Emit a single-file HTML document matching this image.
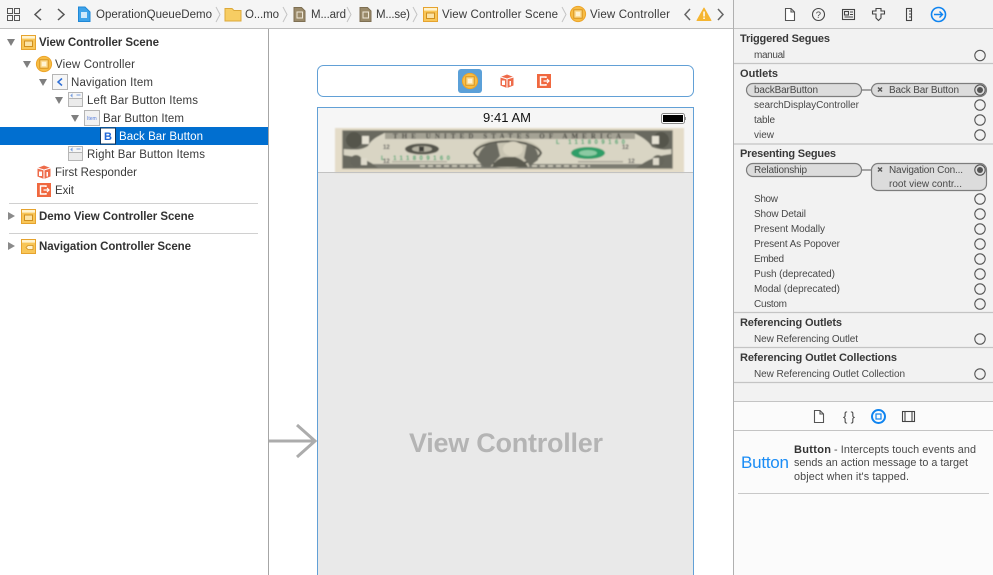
<!DOCTYPE html>
<html>
<head>
<meta charset="utf-8">
<style>
html,body{margin:0;padding:0;width:993px;height:575px;overflow:hidden;background:#fff}
svg{display:block}
text{font-family:"Liberation Sans",sans-serif;font-size:11.5px;fill:#3a3a3a}
.b{font-weight:bold;font-size:11.5px;fill:#333}
.s{font-size:10px;fill:#484848}
.h{font-size:11px;font-weight:bold;fill:#383838}
.c{fill:none;stroke:#555;stroke-width:1.1}
.l{stroke:#c4c4c4;stroke-width:1.2}
.i{fill:none;stroke:#444;stroke-width:1.1}
.p{fill:#dcdcdc;stroke:#7d7d7d;stroke-width:1.2}
</style>
</head>
<body>
<svg width="993" height="575" viewBox="0 0 993 575" xmlns="http://www.w3.org/2000/svg">
<defs>
<filter id="bl" x="-2%" y="-10%" width="104%" height="120%"><feGaussianBlur stdDeviation="0.7"/></filter>
<g id="scene"><rect x=".5" y=".5" width="14" height="14" fill="#f8c658" stroke="#e6a32e"/><rect x="1" y="1" width="13" height="2.6" fill="#fff3cf"/><rect x="3.5" y="6" width="8" height="5.5" fill="#fbe3a6" stroke="#d08f1e"/></g>
<g id="vc"><circle cx="8" cy="8" r="7.6" fill="#f7bd45" stroke="#eda52a"/><rect x="3.8" y="3.8" width="8.4" height="8.4" fill="#fbd98b" stroke="#d89420"/><rect x="5.8" y="5.8" width="4.4" height="4.4" fill="#fff3d3"/></g>
<g id="fr"><path d="M7 0.5 L13.5 3 L13.5 11.5 L7 14 L0.5 11.5 L0.5 3Z" fill="#ee6b4a"/><path d="M7 5 L7 14 M0.5 3 L7 5 L13.5 3" stroke="#fff" fill="none"/><rect x="2" y="6.5" width="3" height="4.5" fill="#fff"/><path d="M9.5 7h1.5v4.5h-1.5z" fill="#fff"/></g>
<g id="ex"><rect width="14" height="14" fill="#f0683f"/><path d="M9 4V3H3.5v8H9v-1" fill="none" stroke="#fff" stroke-width="1.4"/><path d="M6.5 7h5M10 5l2 2-2 2" fill="none" stroke="#fff" stroke-width="1.2"/></g>
<g id="bar"><rect x=".5" y=".5" width="14" height="14" fill="#f6f6f6" stroke="#b5b5b5"/><path d="M1 6.5h13" stroke="#b5b5b5"/><rect x="1" y="7" width="13" height="7" fill="#ebebeb"/><path d="M3 3.5l1-1v2zM8.5 3h4" stroke="#7aa0e0" fill="none"/></g>
<g id="doc"><path d="M.5.5H6L9.500 4V12.500H.5Z M6 .5V4H9.500" fill="#fff" stroke="#555" stroke-width="1.1"/></g>
<g id="ci"><circle cx="0" cy="0" r="5.2" class="c"/></g>
<g id="tri"><path d="M0 0H8L4 7Z" fill="#7f7f7f"/></g>
<g id="trr"><path d="M0 0V8L7 4Z" fill="#8a8a8a"/></g>
<g id="sep"><path d="M0 0L4 7.5L0 15" fill="none" stroke="#c4c4c4" stroke-width="1"/></g>
<g id="sb"><path d="M1 .5H8.5L12 4V14.5H1Z" fill="#9a8a6a" stroke="#7e6f52"/><rect x="4" y="5" width="5.5" height="6" fill="none" stroke="#f0e8d8"/></g>
</defs>

<!-- toolbar -->
<rect x="0" y="0" width="733" height="28" fill="#f5f5f5"/>
<g fill="none" stroke="#555" stroke-width="1">
<rect x="7.5" y="8.5" width="5" height="5"/><rect x="14.5" y="8.5" width="5" height="5"/><rect x="7.5" y="15.5" width="5" height="5"/><rect x="14.5" y="15.5" width="5" height="5"/>
</g>
<path d="M41 9L35 14.5L41 20M58 9L64 14.5L58 20" fill="none" stroke="#555" stroke-width="1.5"/>
<path d="M78.500 7H85L90 12V21.500H78.500Z" fill="#3ea3ea" stroke="#1f88d6"/><rect x="81" y="12" width="6" height="6" fill="#cfe9fb"/>
<text x="96" y="18" textLength="116" lengthAdjust="spacing">OperationQueueDemo</text>
<use href="#sep" x="216" y="7"/>
<path d="M225 8.500H232L234 10.500H241V21H225Z" fill="#f7cd63" stroke="#dca93a"/>
<text x="245" y="18" textLength="34">O...mo</text>
<use href="#sep" x="283" y="7"/>
<use href="#sb" x="293" y="7"/>
<text x="311" y="18" textLength="35">M...ard</text>
<use href="#sep" x="347" y="7"/>
<use href="#sb" x="359" y="7"/>
<text x="376" y="18" textLength="34">M...se)</text>
<use href="#sep" x="413" y="7"/>
<use href="#scene" x="423" y="7"/>
<text x="442" y="18" textLength="116">View Controller Scene</text>
<use href="#sep" x="562" y="7"/>
<use href="#vc" x="570" y="6"/>
<text x="590" y="18" textLength="80">View Controller</text>
<path d="M690 9L685 14.500L690 20M718 9L723 14.500L718 20" fill="none" stroke="#666" stroke-width="1.5"/>
<path d="M704 8L711 20.500H697Z" fill="#f5b531" stroke="#f5b531" stroke-linejoin="round"/><rect x="703.300" y="11.500" width="1.500" height="5" fill="#fff"/><rect x="703.300" y="17.500" width="1.500" height="1.500" fill="#fff"/>
<rect x="0" y="28" width="733" height="1" fill="#bdbdbd"/>

<!-- left pane -->
<rect x="0" y="29" width="268" height="546" fill="#fff"/>
<rect x="0" y="127" width="268" height="18" fill="#016fd0"/>
<rect x="268" y="29" width="1" height="546" fill="#a6a6a6"/>

<use href="#tri" x="7" y="39"/>
<use href="#scene" x="21" y="35"/>
<text x="39" y="46" class="b" textLength="120">View Controller Scene</text>

<use href="#tri" x="23" y="61"/>
<use href="#vc" x="36" y="56"/>
<text x="55" y="68" textLength="80">View Controller</text>

<use href="#tri" x="39" y="79"/>
<rect x="52.500" y="74.500" width="15" height="15" fill="#f6f6f6" stroke="#b5b5b5"/><path d="M62 78.500L58 82L62 85.500" fill="none" stroke="#2f6fd6" stroke-width="1.500"/>
<text x="71" y="86" textLength="82">Navigation Item</text>

<use href="#tri" x="55" y="97"/>
<use href="#bar" x="68" y="92"/>
<text x="87" y="104" textLength="111">Left Bar Button Items</text>

<use href="#tri" x="71" y="115"/>
<rect x="84.500" y="110.500" width="15" height="15" fill="#f2f2f2" stroke="#b5b5b5"/><text x="87" y="120" style="font-size:5px;fill:#5a80dc">Item</text>
<text x="103" y="122" textLength="81">Bar Button Item</text>

<rect x="100.500" y="128" width="15" height="16" fill="#fff" stroke="#12375e"/>
<text x="104" y="140" style="fill:#2168d8;font-size:11px;font-weight:bold">B</text>
<text x="119" y="140" textLength="84" style="fill:#fff">Back Bar Button</text>

<use href="#bar" x="68" y="146"/>
<text x="87" y="158" textLength="118">Right Bar Button Items</text>

<use href="#fr" x="37" y="165"/>
<text x="55" y="176" textLength="82">First Responder</text>

<use href="#ex" x="37" y="183"/>
<text x="55" y="194" textLength="19">Exit</text>

<rect x="9" y="203" width="249" height="1" fill="#d0d0d0"/>
<use href="#trr" x="8" y="212"/>
<use href="#scene" x="21" y="209"/>
<text x="39" y="220" class="b" textLength="155">Demo View Controller Scene</text>

<rect x="9" y="233" width="249" height="1" fill="#d0d0d0"/>
<use href="#trr" x="8" y="242"/>
<g transform="translate(21 239)"><rect x=".5" y=".5" width="14" height="14" fill="#f8c658" stroke="#e6a32e"/><rect x="1" y="1" width="13" height="2.600" fill="#fff3cf"/><path d="M5 8.500L7 6.500H12V10.500H7Z" fill="#fff3cf" stroke="#d08f1e" stroke-width=".8"/></g>
<text x="39" y="250" class="b" textLength="152">Navigation Controller Scene</text>

<!-- canvas -->
<rect x="269" y="29" width="464" height="546" fill="#fff"/>
<rect x="317.500" y="65.500" width="376" height="31" rx="6" fill="#fff" stroke="#62a0d6"/>
<rect x="458" y="69" width="24" height="24" rx="3" fill="#5ba0d8"/>
<use href="#vc" x="462" y="73"/>
<use href="#fr" x="500" y="74"/>
<use href="#ex" x="537" y="74"/>

<rect x="317.500" y="107.500" width="376" height="480" fill="#e9e9e9" stroke="#62a0d6"/>
<rect x="318" y="108" width="375" height="64" fill="#f6f6f6"/>
<text x="483" y="122" textLength="48" style="font-size:13px;fill:#111">9:41 AM</text>
<rect x="661.500" y="113.500" width="23" height="10" rx="2" fill="#fff" stroke="#888"/>
<rect x="663" y="115" width="20" height="7" fill="#000"/>
<rect x="685" y="117" width="1" height="3" fill="#999"/>

<!-- bill -->
<g filter="url(#bl)">
<rect x="335" y="128" width="349" height="45" fill="#e4dcc8"/>
<rect x="343" y="131" width="329" height="37" fill="#d9d5c4"/>
<rect x="343" y="131" width="329" height="37" fill="none" stroke="#77776c" stroke-width="1.500"/>
<!-- top and bottom bands -->
<rect x="343" y="131" width="329" height="2" fill="#6a6a60"/>
<rect x="385" y="133" width="250" height="6" fill="#a4a294"/>
<text x="393" y="138.500" textLength="228" style="font-family:'Liberation Serif',serif;font-size:7px;font-weight:bold;fill:#3d3d38">THE UNITED STATES OF AMERICA</text>
<rect x="343" y="164" width="329" height="4" fill="#7c7c72"/>
<path d="M420 166h170" stroke="#d9d5c4" stroke-width="1.500" stroke-dasharray="5 3"/>
<!-- corners -->
<path d="M343 131H388C380 136 372 138 368 146C362 150 356 150 343 149Z" fill="#69695f"/>
<path d="M343 168H378C372 163 366 158 343 155Z" fill="#69695f"/>
<path d="M672 131H630C640 136 648 140 652 147C660 150 666 150 672 149Z" fill="#69695f"/>
<path d="M672 168H636C646 161 654 156 672 154Z" fill="#69695f"/>
<circle cx="354" cy="140" r="8" fill="#55554c"/><circle cx="661" cy="140" r="8" fill="#55554c"/>
<circle cx="356" cy="161" r="6" fill="#66665c"/><circle cx="658" cy="161" r="6" fill="#66665c"/>
<rect x="362" y="136" width="7" height="8" fill="#e6e2d4"/>
<rect x="652" y="136" width="7" height="8" fill="#e6e2d4"/>
<rect x="361" y="158" width="6" height="7" fill="#dedacb"/>
<rect x="653" y="158" width="6" height="7" fill="#dedacb"/>
<!-- left seal -->
<ellipse cx="422" cy="149" rx="17" ry="5.500" fill="#55554c"/><ellipse cx="422" cy="149" rx="10" ry="3" fill="#b5b2a2"/><rect x="419" y="146.500" width="5" height="5" fill="#3e3e38"/>
<!-- portrait -->
<ellipse cx="507.500" cy="153" rx="34" ry="15" fill="#c8c4b2"/>
<path d="M474 153A34 14 0 0 1 541 153A34 14 0 0 1 474 153Z" fill="none" stroke="#55554c" stroke-width="2"/>
<path d="M477 160C480 146 490 142 497 143L500 156L490 167H484Z" fill="#6a6a60"/>
<path d="M527 143C535 146 539 152 538 160L530 166L524 158Z" fill="#6a6a60"/>
<path d="M492 167C495 160 500 158 505 157L515 157C522 159 526 163 528 167Z" fill="#5a5a50"/>
<ellipse cx="513" cy="149" rx="10" ry="7.500" fill="#d8d3c0"/>
<!-- green -->
<ellipse cx="588" cy="153" rx="17" ry="6" fill="#2f9e68"/><ellipse cx="588" cy="153" rx="9" ry="3" fill="#8ccaa3"/>
<text x="381" y="160" textLength="69" style="font-size:6px;font-weight:bold;fill:#3aa36a">L 111809160</text>
<text x="556" y="144" textLength="69" style="font-size:6px;font-weight:bold;fill:#3aa36a">L 111809160</text>
<text x="383" y="149" style="font-size:6px;font-weight:bold;fill:#555">12</text>
<text x="622" y="149" style="font-size:6px;font-weight:bold;fill:#555">12</text>
<text x="383" y="163" style="font-size:6px;font-weight:bold;fill:#555">12</text>
<text x="628" y="163" style="font-size:6px;font-weight:bold;fill:#555">12</text>
<rect x="392" y="161" width="55" height="1.500" fill="#b4b1a2"/>
<rect x="578" y="161" width="45" height="1.500" fill="#a9a698"/>
</g>
<rect x="318" y="172" width="375" height="1" fill="#c2c2c2"/>

<path d="M269 441H314M297 425L315 441L297 457" fill="none" stroke="#acacac" stroke-width="3"/>
<text x="409" y="452" textLength="194" style="font-size:27px;font-weight:bold;fill:#b4b4b4">View Controller</text>

<!-- right panel -->
<rect x="733" y="0" width="260" height="402" fill="#f2f2f2"/>
<rect x="733" y="402" width="260" height="173" fill="#fbfbfb"/>
<rect x="733" y="0" width="1" height="575" fill="#b0b0b0"/>
<rect x="734" y="28" width="259" height="1" fill="#c4c4c4"/>

<use href="#doc" x="785" y="8"/>
<circle cx="818.500" cy="14.500" r="6" class="i"/><text x="815.800" y="18" style="font-size:9.500px;fill:#444">?</text>
<rect x="842.500" y="9.500" width="12" height="10" class="i"/><rect x="844.500" y="11.500" width="4" height="3.500" class="i" stroke-width=".8"/><path d="M850 12h3M850 14.500h3M844.500 17h8.500" class="i" stroke-width=".8"/>
<path d="M872.500 11H876V8.500H881V11H884.500V14H881V18L878.500 20.500L876 18V14H872.500Z" class="i"/>
<rect x="906.500" y="8.500" width="5" height="12" class="i"/><path d="M909 11h2.500M909 14h2.500M909 17h2.500" class="i" stroke-width=".8"/>
<circle cx="938.500" cy="14.500" r="7" fill="none" stroke="#0f84f0" stroke-width="1.600"/><path d="M934 14.500H942.500M939.500 11.500L942.500 14.500L939.500 17.500" fill="none" stroke="#0f84f0" stroke-width="1.400"/>

<text x="740" y="42" class="h" textLength="90">Triggered Segues</text>
<text x="754" y="58" class="s" textLength="31">manual</text>
<use href="#ci" x="980" y="55.500"/>
<line x1="734" x2="993" y1="63.500" y2="63.500" class="l"/>

<text x="740" y="77" class="h" textLength="38">Outlets</text>
<line x1="861" x2="872" y1="90" y2="90" stroke="#8a8a8a" stroke-width="1.500"/>
<rect x="746.500" y="83.500" width="115" height="13" rx="6.500" class="p"/>
<rect x="871.500" y="83.500" width="115" height="13" rx="6.500" class="p"/>
<text x="754" y="93" class="s" textLength="64">backBarButton</text>
<path d="M878 87.500L882 91.500M882 87.500L878 91.500" stroke="#555" stroke-width="1.500"/>
<text x="889" y="93" class="s" textLength="70">Back Bar Button</text>
<circle cx="980" cy="90" r="5.200" class="c"/><circle cx="980" cy="90" r="3" fill="#555"/>
<text x="754" y="108" class="s" textLength="105">searchDisplayController</text>
<use href="#ci" x="980" y="105"/>
<text x="754" y="123" class="s" textLength="21">table</text>
<use href="#ci" x="980" y="120"/>
<text x="754" y="138" class="s" textLength="20">view</text>
<use href="#ci" x="980" y="135"/>
<line x1="734" x2="993" y1="144" y2="144" class="l"/>

<text x="740" y="157" class="h" textLength="96">Presenting Segues</text>
<line x1="861" x2="872" y1="170" y2="170" stroke="#8a8a8a" stroke-width="1.500"/>
<rect x="746.500" y="163.500" width="115" height="13" rx="6.500" class="p"/>
<rect x="871.500" y="163.500" width="115" height="27" rx="6.500" class="p"/>
<text x="754" y="173" class="s" textLength="53">Relationship</text>
<path d="M878 167.500L882 171.500M882 167.500L878 171.500" stroke="#555" stroke-width="1.500"/>
<text x="889" y="173" class="s" textLength="74">Navigation Con...</text>
<text x="889" y="187" class="s" textLength="73">root view contr...</text>
<circle cx="980" cy="170" r="5.200" class="c"/><circle cx="980" cy="170" r="3" fill="#555"/>

<text x="754" y="202" class="s" textLength="24">Show</text><use href="#ci" x="980" y="199"/>
<text x="754" y="217" class="s" textLength="52">Show Detail</text><use href="#ci" x="980" y="214"/>
<text x="754" y="232" class="s" textLength="71">Present Modally</text><use href="#ci" x="980" y="229"/>
<text x="754" y="247" class="s" textLength="86">Present As Popover</text><use href="#ci" x="980" y="244"/>
<text x="754" y="262" class="s" textLength="30">Embed</text><use href="#ci" x="980" y="259"/>
<text x="754" y="277" class="s" textLength="81">Push (deprecated)</text><use href="#ci" x="980" y="274"/>
<text x="754" y="292" class="s" textLength="86">Modal (deprecated)</text><use href="#ci" x="980" y="289"/>
<text x="754" y="307" class="s" textLength="33">Custom</text><use href="#ci" x="980" y="304"/>
<line x1="734" x2="993" y1="312.500" y2="312.500" class="l"/>

<text x="740" y="326" class="h" textLength="102">Referencing Outlets</text>
<text x="754" y="342" class="s" textLength="104">New Referencing Outlet</text><use href="#ci" x="980" y="339"/>
<line x1="734" x2="993" y1="347.500" y2="347.500" class="l"/>

<text x="740" y="361" class="h" textLength="157">Referencing Outlet Collections</text>
<text x="754" y="377" class="s" textLength="151">New Referencing Outlet Collection</text><use href="#ci" x="980" y="374"/>
<line x1="734" x2="993" y1="382.500" y2="382.500" class="l"/>

<rect x="734" y="401" width="259" height="1" fill="#c4c4c4"/>
<use href="#doc" x="814" y="410"/>
<text x="843" y="421" style="font-size:13px;fill:#444" textLength="12">{ }</text>
<circle cx="878.500" cy="416.500" r="6.500" fill="none" stroke="#0f84f0" stroke-width="2"/><rect x="876" y="414" width="5" height="5" fill="none" stroke="#0f84f0" stroke-width="1.200"/>
<rect x="902.500" y="411.500" width="12" height="10" class="i"/><path d="M905 411.500V421.500M912 411.500V421.500" class="i" stroke-width=".8"/>
<rect x="734" y="430" width="259" height="1" fill="#c4c4c4"/>

<text x="741" y="468" textLength="48" style="font-size:17px;fill:#1a8cf5">Button</text>
<text x="794" y="453" textLength="37" style="font-size:11px;font-weight:bold;fill:#333">Button</text>
<text x="834" y="453" textLength="142" style="font-size:10.800px;fill:#484848">- Intercepts touch events and</text>
<text x="794" y="466" textLength="174" style="font-size:10.800px;fill:#484848">sends an action message to a target</text>
<text x="794" y="480" textLength="115" style="font-size:10.800px;fill:#484848">object when it's tapped.</text>
<rect x="738" y="493" width="251" height="1" fill="#c8c8c8"/>
</svg>
</body>
</html>
